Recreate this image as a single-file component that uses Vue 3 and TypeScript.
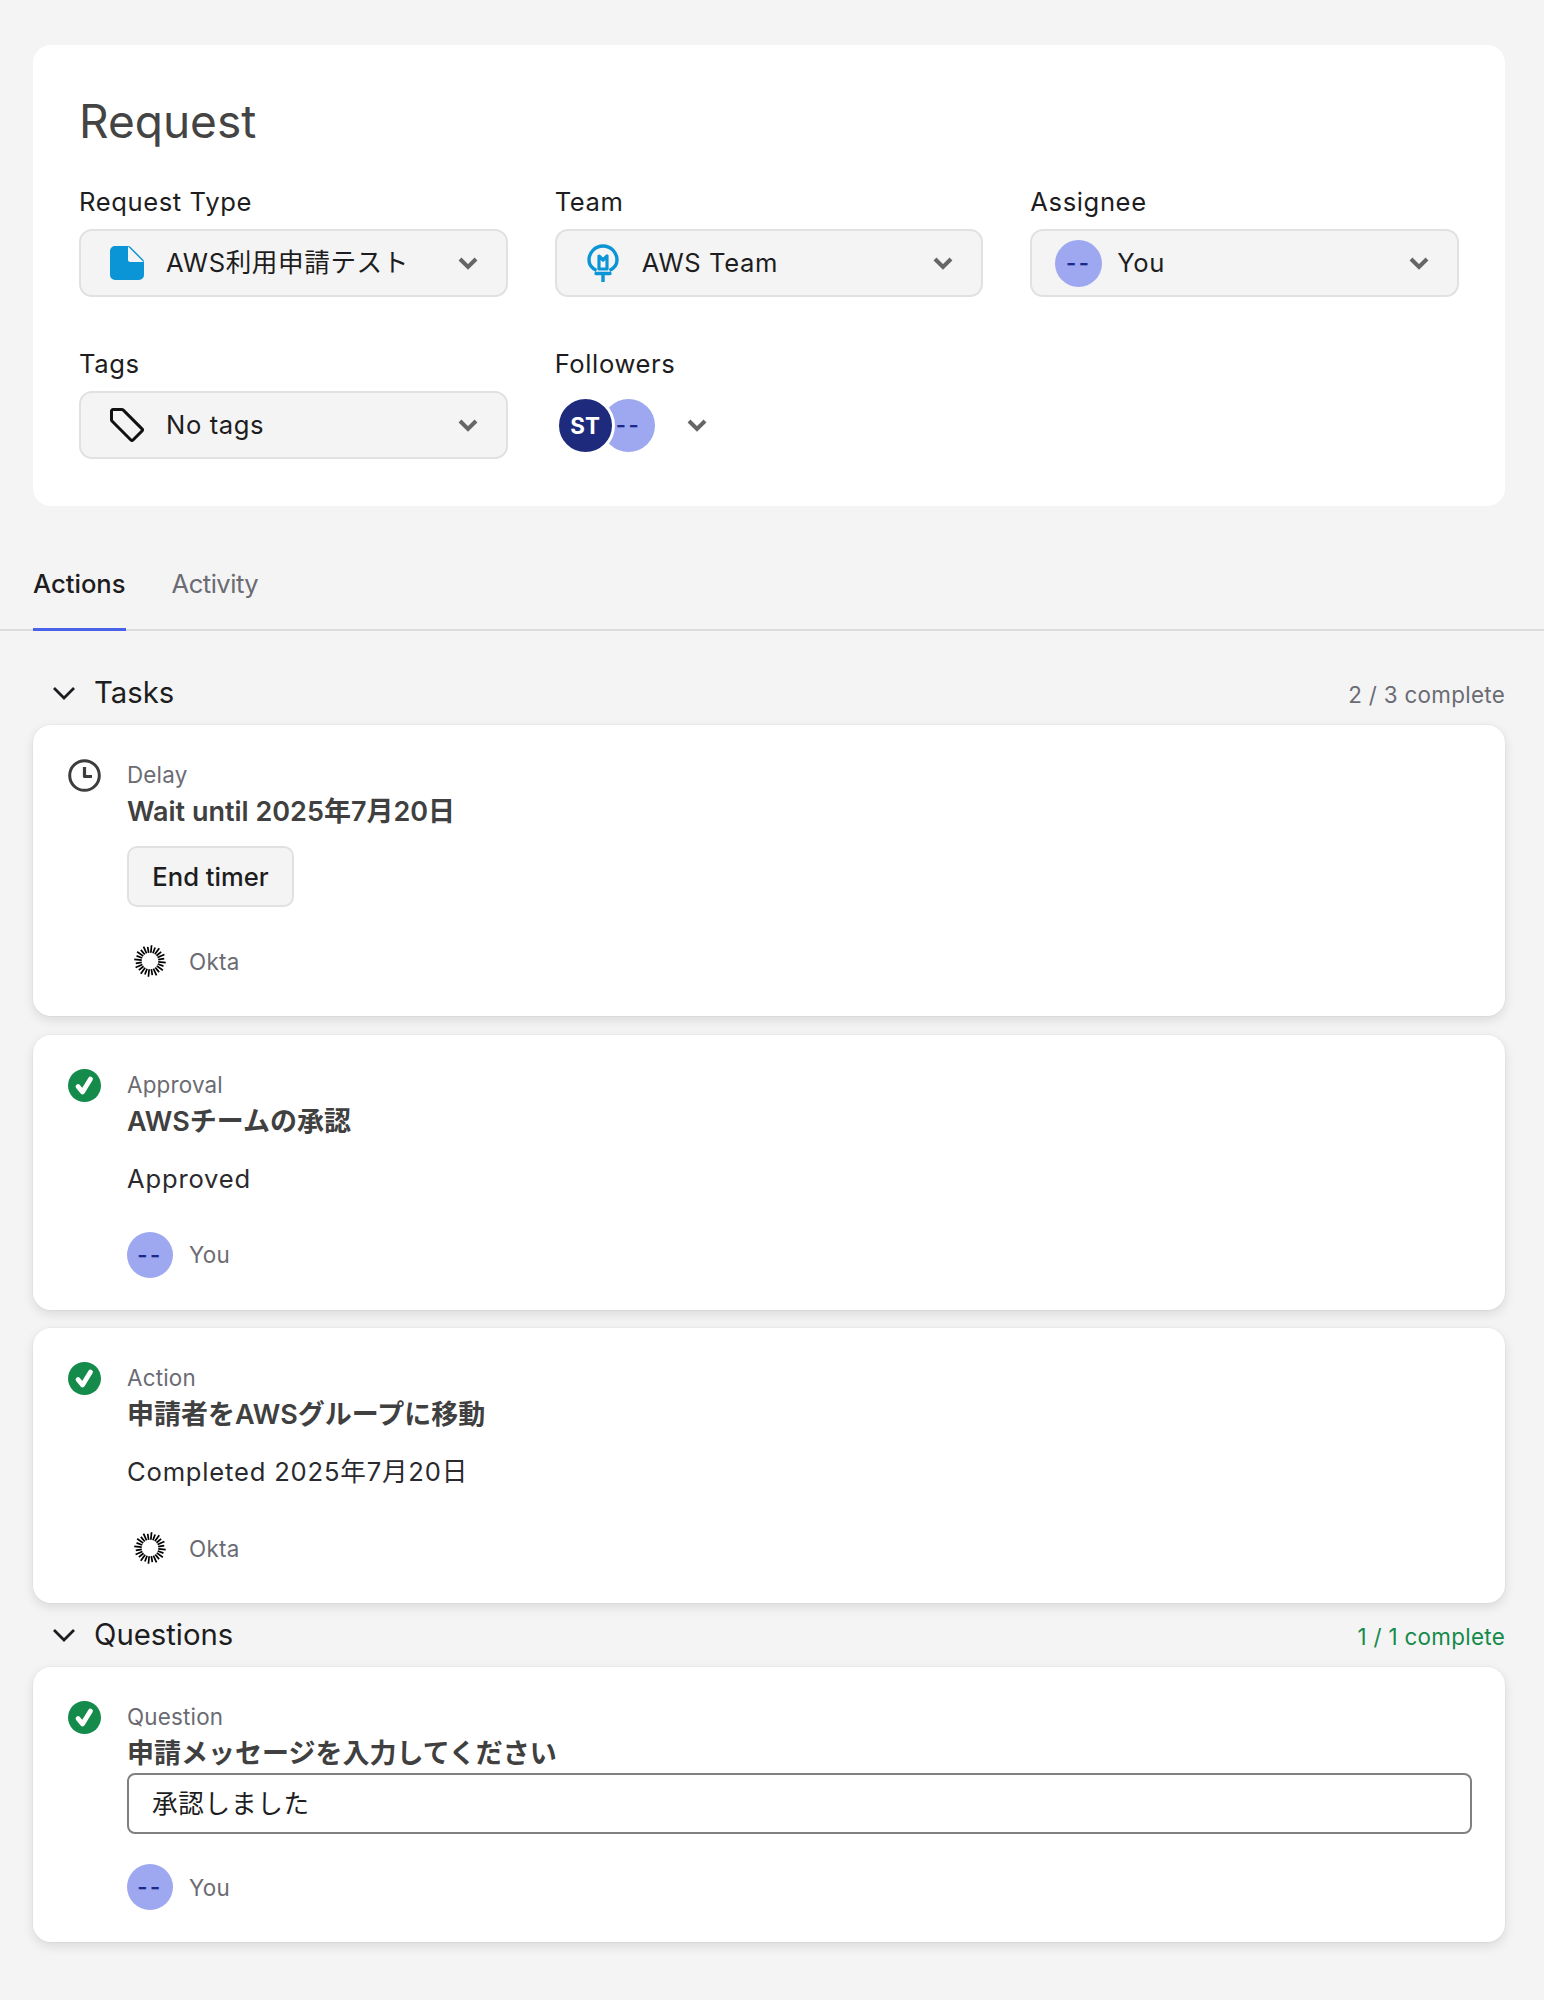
<script setup lang="ts">
interface Task {
  id: string
  status: 'clock' | 'check'
  kind: string
  title: string
  button?: string
  result?: string
  answer?: string
  actor: 'Okta' | 'You'
}

const rays = Array.from({ length: 24 }, (_, i) => {
  const a = (i / 24) * Math.PI * 2 + 0.1
  const inner = 8.3
  const outer = i % 2 ? 14.4 : 15.8
  return {
    x1: 16 + Math.cos(a) * inner,
    y1: 16 + Math.sin(a) * inner,
    x2: 16 + Math.cos(a) * outer,
    y2: 16 + Math.sin(a) * outer,
  }
})

const tasks: Task[] = [
  { id: 'delay', status: 'clock', kind: 'Delay', title: 'Wait until 2025年7月20日', button: 'End timer', actor: 'Okta' },
  { id: 'approval', status: 'check', kind: 'Approval', title: 'AWSチームの承認', result: 'Approved', actor: 'You' },
  { id: 'action', status: 'check', kind: 'Action', title: '申請者をAWSグループに移動', result: 'Completed 2025年7月20日', actor: 'Okta' },
]

const questions: Task[] = [
  { id: 'question', status: 'check', kind: 'Question', title: '申請メッセージを入力してください', answer: '承認しました', actor: 'You' },
]

const sections = [
  { name: 'Tasks', progress: '2 / 3 complete', done: false, items: tasks },
  { name: 'Questions', progress: '1 / 1 complete', done: true, items: questions },
]
</script>

<template>
  <div class="page">
    <section class="request">
      <h1 class="heading">Request</h1>
      <div class="fields">
        <div class="field">
          <div class="label">Request Type</div>
          <div class="select">
            <svg class="select-icon" width="34" height="34" viewBox="0 0 34 34">
              <path d="M5 0H18a4 4 0 0 1 2.800 1.200L32.800 13.200A4 4 0 0 1 34 16V29a5 5 0 0 1-5 5H5a5 5 0 0 1-5-5V5a5 5 0 0 1 5-5Z" fill="#0b95d6" />
              <path d="M18 0.500 33.500 16H20.500a2.500 2.500 0 0 1-2.500-2.500Z" fill="#f4f4f4" />
            </svg>
            <span class="select-text">AWS利用申請テスト</span>
            <svg class="chev" width="20" height="14" viewBox="0 0 20 14"><path d="M2 3l8 8 8-8" /></svg>
          </div>
        </div>
        <div class="field">
          <div class="label">Team</div>
          <div class="select">
            <svg class="select-icon bulb" width="32" height="38" viewBox="0 0 32 38">
              <path d="M9.500 26.500C4.500 24 2 20.500 2 16a14 14 0 0 1 28 0c0 4.500-2.500 8-7.500 10.500" fill="none" stroke="#0b95d6" stroke-width="3.400" />
              <path d="M9 29.500h14M16 30v8" fill="none" stroke="#0b95d6" stroke-width="3.400" stroke-linecap="round" />
              <path d="M12 25V12l4 4 4-4v13Z" fill="none" stroke="#0b95d6" stroke-width="3.200" stroke-linejoin="round" />
            </svg>
            <span class="select-text">AWS Team</span>
            <svg class="chev" width="20" height="14" viewBox="0 0 20 14"><path d="M2 3l8 8 8-8" /></svg>
          </div>
        </div>
        <div class="field">
          <div class="label">Assignee</div>
          <div class="select">
            <span class="avatar select-icon assignee">--</span>
            <span class="select-text">You</span>
            <svg class="chev" width="20" height="14" viewBox="0 0 20 14"><path d="M2 3l8 8 8-8" /></svg>
          </div>
        </div>
        <div class="field">
          <div class="label">Tags</div>
          <div class="select">
            <svg class="select-icon" width="34" height="34" viewBox="0 0 34 34">
              <path d="M3 1.500H11.500a2.500 2.500 0 0 1 1.800.700L32 20.900a1.500 1.500 0 0 1 0 2.100L23 32a1.500 1.500 0 0 1-2.100 0L2.200 13.300a2.500 2.500 0 0 1-.7-1.800V3A1.500 1.500 0 0 1 3 1.500Z" fill="none" stroke="#111" stroke-width="3" stroke-linejoin="round" />
            </svg>
            <span class="select-text">No tags</span>
            <svg class="chev" width="20" height="14" viewBox="0 0 20 14"><path d="M2 3l8 8 8-8" /></svg>
          </div>
        </div>
        <div class="field">
          <div class="label">Followers</div>
          <div class="followers">
            <div class="stack">
              <span class="avatar st">ST</span>
              <span class="avatar other">--</span>
            </div>
            <svg class="chev" width="20" height="14" viewBox="0 0 20 14"><path d="M2 3l8 8 8-8" /></svg>
          </div>
        </div>
      </div>
    </section>

    <nav class="tabs">
      <div class="tab active">Actions</div>
      <div class="tab">Activity</div>
    </nav>

    <main class="content">
      <section v-for="section in sections" :key="section.name" class="group">
        <header class="group-head">
          <svg class="group-chev" width="24" height="14" viewBox="0 0 24 14"><path d="M2 2l10 10L22 2" /></svg>
          <span class="group-name">{{ section.name }}</span>
          <span class="progress" :class="{ done: section.done }">{{ section.progress }}</span>
        </header>
        <div class="cards">
          <article v-for="task in section.items" :key="task.id" class="card">
            <div class="status">
              <svg v-if="task.status === 'clock'" width="33" height="33" viewBox="0 0 33 33">
                <circle cx="16.500" cy="16.500" r="14.800" fill="none" stroke="#3d3d3d" stroke-width="3" />
                <path d="M16.500 8v9.500H24" fill="none" stroke="#3d3d3d" stroke-width="3.200" stroke-linejoin="round" />
              </svg>
              <svg v-else width="33" height="33" viewBox="0 0 33 33">
                <circle cx="16.500" cy="16.500" r="16.500" fill="#148a4b" />
                <path d="M10 17.500l4.500 5.500L22.500 10" fill="none" stroke="#fff" stroke-width="4.800" stroke-linecap="round" stroke-linejoin="round" />
              </svg>
            </div>
            <div class="body">
              <div class="kind">{{ task.kind }}</div>
              <div class="title">{{ task.title }}</div>
              <button v-if="task.button" class="btn" type="button">{{ task.button }}</button>
              <div v-if="task.result" class="result">{{ task.result }}</div>
              <div v-if="task.answer" class="answer">{{ task.answer }}</div>
              <div class="actor">
                <span v-if="task.actor === 'You'" class="avatar you">--</span>
                <span v-else class="okta">
                  <svg width="32" height="32" viewBox="0 0 32 32">
                    <line v-for="(r, i) in rays" :key="i" :x1="r.x1" :y1="r.y1" :x2="r.x2" :y2="r.y2" stroke="#000" stroke-width="1.700" />
                  </svg>
                </span>
                <span class="actor-name">{{ task.actor }}</span>
              </div>
            </div>
          </article>
        </div>
      </section>
    </main>
  </div>
</template>

<style>
html, body { margin: 0; background: #f4f4f4; }
</style>

<style scoped>
.page {
  min-height: 2000px;
  box-sizing: border-box;
  padding-top: 45px;
  background: #f4f4f4;
  font-family: Inter, "Noto Sans CJK JP", sans-serif;
  color: #1d1d21;
}
.request {
  margin: 0 39px 0 33px;
  padding: 46px 46px 47px;
  background: #fff;
  border-radius: 18px;
}
.heading {
  margin: 0 0 35px;
  font-size: 46px;
  line-height: 60px;
  font-weight: 400;
  color: #444;
}
.fields {
  display: grid;
  grid-template-columns: repeat(3, 1fr);
  column-gap: 47px;
  row-gap: 51px;
}
.label {
  font-size: 25.6px;
  line-height: 32px;
  margin-bottom: 11px;
  letter-spacing: 0.6px;
}
.select {
  display: flex;
  align-items: center;
  box-sizing: border-box;
  height: 68px;
  padding: 0 28px 0 29px;
  background: #f4f4f4;
  border: 2px solid #e1e1e1;
  border-radius: 13px;
}
.select-icon { flex: none; margin-right: 22px; }
.bulb { margin-left: 1px; margin-right: 23px; }
.select-text {
  flex: 1;
  height: 32px;
  font-size: 25.6px;
  line-height: 32px;
  letter-spacing: 0.6px;
}
.chev { flex: none; }
.chev path {
  fill: none;
  stroke: #666;
  stroke-width: 4;
}
.avatar {
  display: flex;
  align-items: center;
  justify-content: center;
  border-radius: 50%;
  box-sizing: border-box;
  flex: none;
}
.assignee, .you {
  width: 46px;
  height: 46px;
  background: #9ea8f0;
  color: #1b2a8a;
  font-size: 22px;
  font-weight: 600;
  letter-spacing: 2.500px;
}
.assignee { width: 47px; height: 47px; margin-left: -6px; margin-right: 15px; }
.followers {
  display: flex;
  align-items: center;
  height: 68px;
}
.stack {
  display: flex;
  margin-left: 1px;
  margin-right: 32px;
}
.st {
  position: relative;
  z-index: 1;
  width: 59px;
  height: 59px;
  background: #1e2b7d;
  border: 3px solid #fff;
  color: #fff;
  font-size: 22.400px;
  font-weight: 700;
}
.other {
  width: 53px;
  height: 53px;
  margin: 3px 0 0 -13px;
  background: #9ea8f0;
  color: #1b2a8a;
  font-size: 22px;
  font-weight: 600;
  letter-spacing: 2.500px;
  justify-content: flex-start;
  padding-left: 14px;
}
.tabs {
  display: flex;
  gap: 46px;
  margin-top: 62px;
  padding: 0 33px;
  border-bottom: 2px solid #dcdcdc;
}
.tab {
  padding-bottom: 28px;
  margin-bottom: -2px;
  border-bottom: 3px solid transparent;
  font-size: 25.6px;
  line-height: 32px;
  color: #6b6b73;
  letter-spacing: -0.5px;
}
.tab.active {
  color: #1d1d21;
  font-weight: 500;
  letter-spacing: 0;
  border-bottom-color: #4a62e8;
}
.content { margin: 40px 39px 0 33px; }
.group { margin-bottom: 10px; }
.group-head {
  display: flex;
  align-items: center;
  height: 44px;
  margin-bottom: 10px;
}
.group-chev { margin-left: 19px; margin-right: 18px; }
.group-chev path {
  fill: none;
  stroke: #1d1d21;
  stroke-width: 2.800;
}
.group-name { flex: 1; padding-bottom: 2px; font-size: 29.300px; }
.progress { padding-top: 2px; font-size: 22.400px; color: #6b6b73; letter-spacing: 0.3px; }
.progress.done { color: #148a4b; }
.cards {
  display: flex;
  flex-direction: column;
  gap: 18.500px;
}
.card {
  display: flex;
  padding: 34px 33px 32px 35px;
  background: #fff;
  border-radius: 18px;
  box-shadow: 0 0 0 1px rgba(0, 0, 0, 0.025), 0 4px 12px rgba(0, 0, 0, 0.11);
}
.status { flex: none; width: 59px; height: 33px; }
.body { flex: 1; min-width: 0; }
.kind {
  padding-bottom: 1px;
  font-size: 22.400px;
  line-height: 32px;
  color: #6b6b73;
  letter-spacing: 0.2px;
}
.title {
  font-size: 27px;
  line-height: 40px;
  font-weight: 600;
  color: #404040;
}
.btn {
  display: block;
  box-sizing: border-box;
  width: 167px;
  height: 61px;
  margin-top: 14px;
  padding: 0;
  background: #f4f4f4;
  border: 2px solid #e1e1e1;
  border-radius: 10px;
  font-family: inherit;
  font-size: 25.6px;
  font-weight: 500;
  color: #1d1d21;
}
.result {
  margin-top: 19px;
  font-size: 25.6px;
  line-height: 36px;
  letter-spacing: 0.8px;
  color: #2a2a2e;
}
.answer {
  box-sizing: border-box;
  height: 61px;
  margin-top: -1px;
  padding: 0 23px;
  border: 2px solid #808080;
  border-radius: 8px;
  font-size: 25.6px;
  line-height: 57px;
  letter-spacing: 0.7px;
}
.actor {
  display: flex;
  align-items: center;
  height: 46px;
  margin-top: 31px;
}
.result + .actor { margin-top: 35px; }
.answer + .actor { margin-top: 30px; }
.okta {
  display: flex;
  justify-content: center;
  width: 46px;
}
.actor-name {
  margin-left: 16px;
  font-size: 22.400px;
  color: #6b6b73;
  letter-spacing: 0.3px;
}
</style>
